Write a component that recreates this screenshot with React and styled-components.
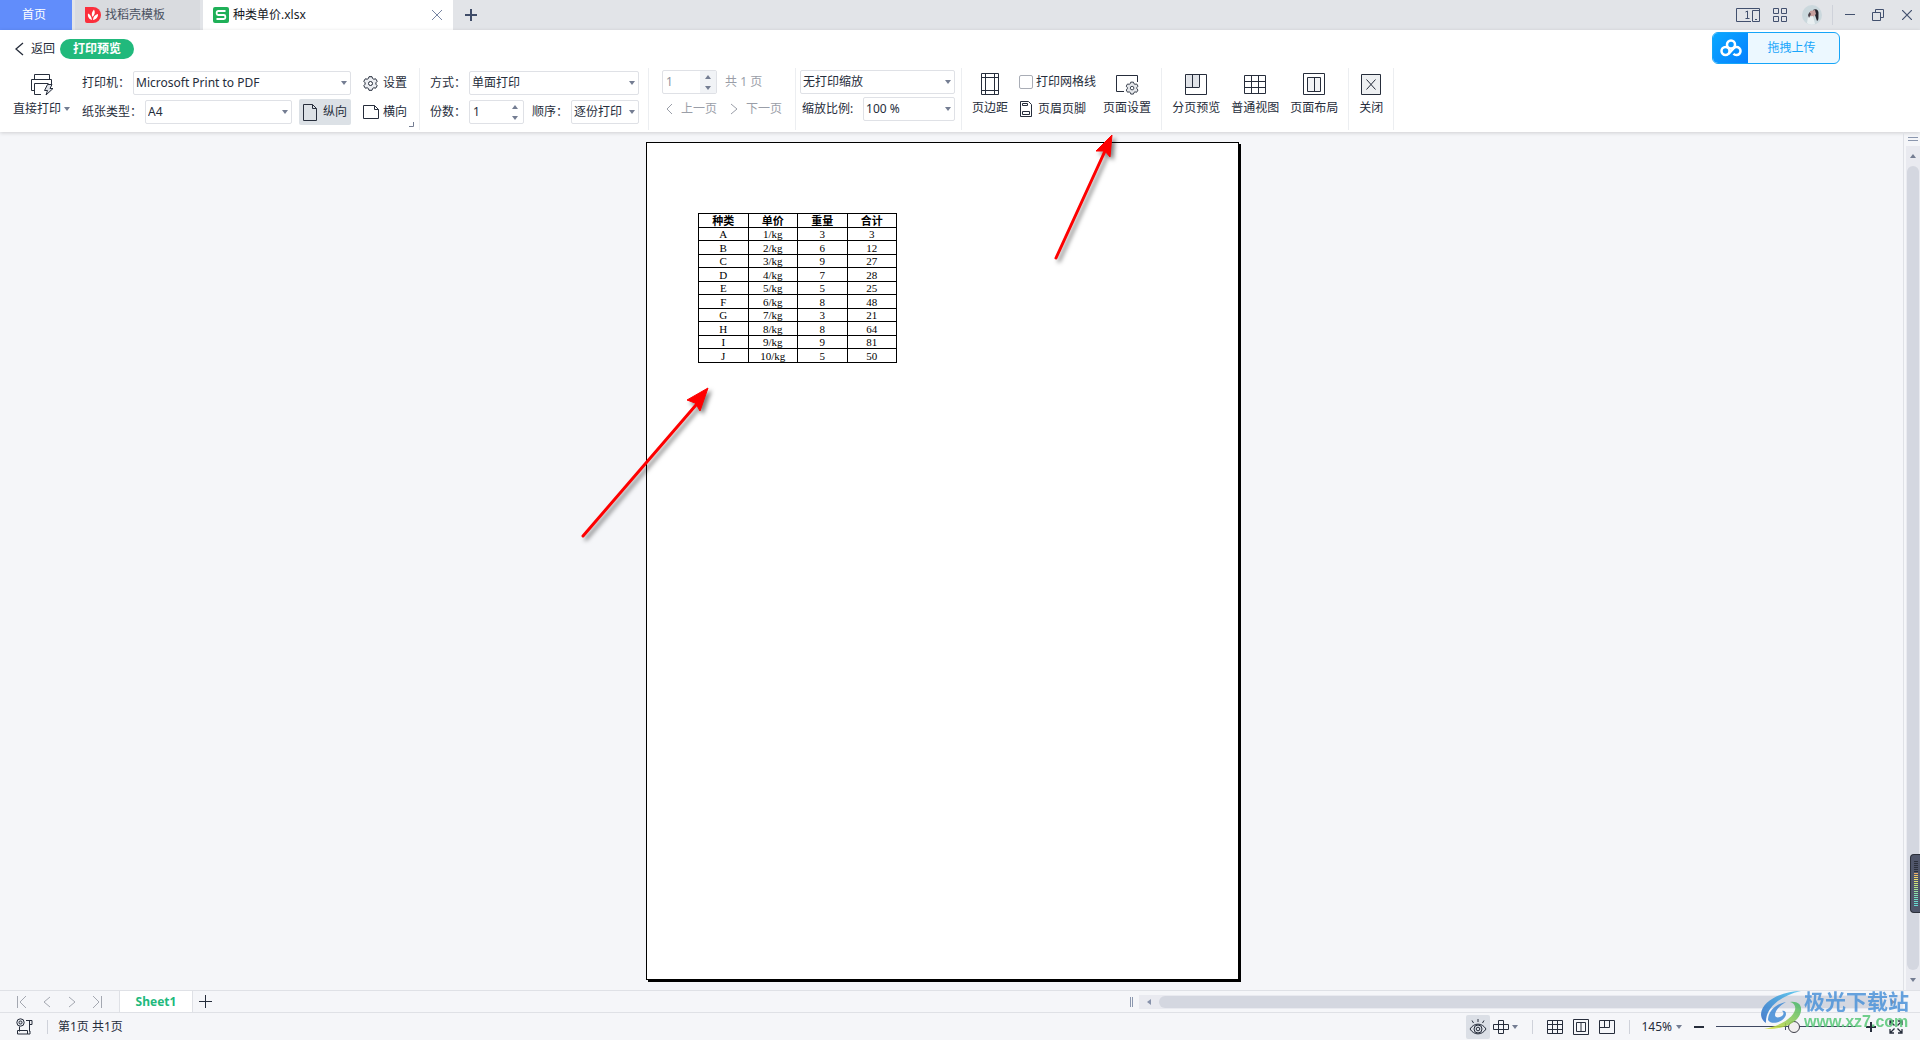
import React, { useState } from "react";
import styled, { createGlobalStyle } from "styled-components";

const INK = "#262d3b";
const LINE = "#dfe1e6";

const GlobalStyle = createGlobalStyle`
  *, *::before, *::after { box-sizing: border-box; }
  body { margin: 0; }
  body, button, input, select {
    font-family: "Noto Sans", "Noto Sans CJK SC", sans-serif;
    font-size: 12px;
    line-height: 16px;
    color: ${INK};
  }
  button { border: 0; padding: 0; margin: 0; background: none; cursor: pointer; }
  svg { display: block; flex: none; }
`;

/* ---------- shell ---------- */

const Window = styled.div`
  display: flex;
  flex-direction: column;
  min-height: 100vh;
  background: #f5f6f9;
`;

const Spacer = styled.div`
  flex: 1;
`;

/* ---------- title bar ---------- */

const TitleBar = styled.div`
  display: flex;
  align-items: stretch;
  height: 30px;
  background: #e2e4e8;
`;

const HomeTab = styled.button`
  width: 72px;
  margin-right: 3px;
  padding-right: 4px;
  background: #618dfb;
  color: #fff;
`;

const FileTab = styled.div`
  display: flex;
  align-items: center;
  gap: 4px;
  width: ${(p) => (p.$active ? 250 : 125)}px;
  padding: 0 10px;
  margin-right: ${(p) => (p.$active ? 0 : 3)}px;
  background: ${(p) => (p.$active ? "#fff" : "#d9dbdf")};
  color: ${(p) => (p.$active ? "#15181f" : "#4a5161")};
`;

const TabName = styled.button`
  color: inherit;
  flex: 1;
  text-align: left;
`;

const IconButton = styled.button`
  display: flex;
  align-items: center;
  justify-content: center;
  gap: 3px;
  width: ${(p) => p.$w || 24}px;
  height: ${(p) => p.$h || 24}px;
  border-radius: 2px;
  background: ${(p) => (p.$on ? "#dbdfe6" : "none")};
  flex: none;
`;

const WindowTools = styled.div`
  display: flex;
  align-items: center;
  padding-right: 3px;
`;

const Rule = styled.i`
  width: 1px;
  height: ${(p) => p.$h}px;
  margin: 0 ${(p) => p.$after || p.$gap}px 0 ${(p) => p.$gap}px;
  background: #cfd2da;
  flex: none;
`;

/* ---------- header ---------- */

const Header = styled.header`
  position: relative;
  background: #fff;
  box-shadow: 0 1px 4px rgba(0, 0, 0, 0.16);
`;

const NavRow = styled.div`
  display: flex;
  align-items: center;
  gap: 5px;
  height: 38px;
  padding: 0 15px;
`;

const BackButton = styled.button`
  display: flex;
  align-items: center;
  gap: 7px;
`;

const Pill = styled.span`
  height: 20px;
  padding: 2px 13px;
  border-radius: 10px;
  background: #21b97c;
  color: #fff;
  font-weight: 700;
`;

const UploadButton = styled.button`
  position: absolute;
  top: 2px;
  right: 80px;
  display: flex;
  align-items: stretch;
  width: 128px;
  height: 32px;
  border: 1px solid #16a5f8;
  border-radius: 6px;
  overflow: hidden;
  background: #ecf8ff;
`;

const UploadMark = styled.span`
  display: flex;
  align-items: center;
  justify-content: center;
  width: 35px;
  background: linear-gradient(135deg, #0aa8ff, #0680ff);
`;

const UploadText = styled.span`
  flex: 1;
  align-self: center;
  padding-right: 4px;
  color: #18a6fb;
`;

/* ---------- ribbon ---------- */

const Ribbon = styled.div`
  display: flex;
  height: 64px;
  padding: 0 0 2px 13px;
`;

const Group = styled.section`
  position: relative;
  display: flex;
  gap: ${(p) => p.$gap || 0}px;
  padding: 0 ${(p) => p.$right}px 0 ${(p) => p.$left || 0}px;
  border-right: 1px solid #eceef1;
`;

const Stack = styled.div`
  display: flex;
  flex-direction: column;
  gap: ${(p) => (p.$tight ? 3 : 5)}px;
  padding-top: ${(p) => (p.$tight ? 2 : 3)}px;
`;

const OptionStack = styled(Stack)`
  margin: 0 7px 0 11px;
`;

const Row = styled.div`
  display: flex;
  align-items: center;
  gap: ${(p) => (p.$gap === undefined ? 12 : p.$gap)}px;
  height: 24px;
  padding-left: ${(p) => p.$left || 0}px;
  white-space: nowrap;
  color: ${(p) => (p.$muted ? "#9a9ea8" : INK)};
`;

const Field = styled.div`
  display: flex;
  align-items: center;
  gap: 3px;
  width: ${(p) => (p.$w ? p.$w + "px" : "auto")};
  flex: ${(p) => (p.$grow ? 1 : "none")};
`;

const SelectBox = styled.span`
  display: grid;
  flex: 1;
  align-items: center;
  height: 24px;
  border: 1px solid ${LINE};
  border-radius: 2px;
  background: #fff;
  & > * { grid-area: 1 / 1; }
  & > svg { justify-self: end; margin-right: 3px; pointer-events: none; }
`;

const NativeSelect = styled.select`
  appearance: none;
  width: 100%;
  height: 22px;
  min-width: 0;
  padding: 0 12px 0 2px;
  border: 0;
  background: transparent;
`;

const SpinBox = styled.span`
  display: flex;
  width: 55px;
  height: 24px;
  border: 1px solid ${LINE};
  border-radius: 2px;
  background: #fff;
`;

const SpinInput = styled.input`
  flex: 1;
  min-width: 0;
  padding: 0 3px;
  border: 0;
  background: none;
  &:disabled { color: #8e939e; }
`;

const SpinButtons = styled.span`
  display: flex;
  flex-direction: column;
  width: 16px;
  background: ${(p) => (p.$muted ? "#f1f3f6" : "none")};
  & > button {
    flex: 1;
    display: flex;
    align-items: center;
    justify-content: center;
  }
`;

const InlineButton = styled.button`
  display: flex;
  align-items: center;
  gap: ${(p) => p.$gap || 5}px;
  height: ${(p) => (p.$on ? 26 : 24)}px;
  padding: ${(p) => (p.$on ? "0 4px" : 0)};
  border-radius: 2px;
  background: ${(p) => (p.$on ? "#dce1e6" : "none")};
  color: inherit;
  white-space: nowrap;
`;

const BigButton = styled.button`
  display: flex;
  flex-direction: column;
  align-items: center;
  gap: 5px;
  height: 52px;
  padding-top: 5px;
  white-space: nowrap;
`;

const BigLabel = styled.span`
  display: flex;
  align-items: center;
  gap: 3px;
`;

const CheckLabel = styled.label`
  display: flex;
  align-items: center;
  gap: 3px;
`;

const Checkbox = styled.input`
  appearance: none;
  width: 14px;
  height: 14px;
  margin: 0;
  border: 1px solid #a9adb6;
  border-radius: 2px;
  background: #fff;
  &:checked { background: #21b97c; }
`;

const Launcher = styled.button`
  position: absolute;
  right: 5px;
  bottom: 3px;
`;

/* ---------- canvas ---------- */

const Workspace = styled.main`
  flex: 1;
  display: flex;
`;

const Canvas = styled.div`
  flex: 1;
  display: flex;
  justify-content: center;
  align-items: flex-start;
  padding: 10px 18px 10px 0;
`;

const Paper = styled.article`
  position: relative;
  width: 593px;
  aspect-ratio: 593 / 838;
  padding: 70px 51px;
  border: 1px solid #000;
  background: #fff;
  box-shadow: 2px 2px 0 #000;
`;

const DataTable = styled.table`
  width: 199px;
  table-layout: fixed;
  border-collapse: collapse;
  font-family: "Liberation Serif", "Noto Sans CJK SC", serif;
  font-size: 11px;
  line-height: 12px;
  color: #000;
  th, td {
    height: 13px;
    padding: 0;
    border: 1px solid #000;
    text-align: center;
  }
  tr:nth-child(even) td, th { height: 14px; }
`;

const Annotation = styled.svg`
  position: absolute;
  left: ${(p) => p.$x}px;
  top: ${(p) => p.$y}px;
  overflow: visible;
  pointer-events: none;
  filter: drop-shadow(3px 3px 2px rgba(0, 0, 0, 0.5));
`;

const SideBar = styled.div`
  position: relative;
  display: flex;
  flex-direction: column;
  width: 17px;
  padding: 4px 0 0 2px;
  border-left: 1px solid ${LINE};
`;

const SplitMark = styled.i`
  align-self: center;
  width: 10px;
  height: 4px;
  margin: 1px 0 5px;
  border: solid #8b97ae;
  border-width: 1px 0;
`;

const Track = styled.div`
  flex: 1;
  display: flex;
  flex-direction: ${(p) => (p.$vertical ? "column" : "row")};
  align-items: stretch;
  background: #e9eaf0;
`;

const Thumb = styled.div`
  flex: 1;
  margin: ${(p) => (p.$vertical ? "0 1px" : "1px 0")};
  border-radius: 6px;
  background: #d4d7e0;
`;

const Meter = styled.div`
  position: absolute;
  right: 0;
  bottom: 77px;
  display: flex;
  flex-direction: column;
  align-items: center;
  gap: 1px;
  width: 10px;
  height: 59px;
  padding-top: 6px;
  border: 1px solid #2c303a;
  border-right: 0;
  border-radius: 4px 0 0 4px;
  background: #50566a;
`;

const MeterBar = styled.i`
  width: 4px;
  height: 1px;
  background: ${(p) => p.$c};
`;

/* ---------- bottom bars ---------- */

const Bottom = styled.footer`
  position: relative;
`;

const SheetBar = styled.div`
  display: flex;
  align-items: center;
  height: 23px;
  padding-right: 17px;
  border: solid ${LINE};
  border-width: 1px 0;
`;

const SheetNav = styled.div`
  display: flex;
  width: 119px;
  padding-left: 9px;
`;

const SheetTab = styled.button`
  align-self: stretch;
  width: 74px;
  border: solid ${LINE};
  border-width: 0 1px;
  background: #fff;
  color: #21b97c;
  font-weight: 700;
`;

const HScroll = styled.div`
  display: flex;
  align-items: center;
  gap: 6px;
  width: 773px;
  height: 14px;
  & > ${Track} { height: 14px; }
`;

const Grip = styled.i`
  width: 3px;
  height: 10px;
  border: solid #8b97ae;
  border-width: 0 1px;
`;

const StatusBar = styled.div`
  display: flex;
  align-items: center;
  height: 27px;
  padding: 0 6px 0 12px;
  white-space: nowrap;
`;

const ViewTools = styled.div`
  display: flex;
  align-items: center;
`;

const ZoomButton = styled.button`
  display: flex;
  align-items: center;
  gap: 4px;
  margin-right: 8px;
`;

const ZoomRange = styled.input`
  appearance: none;
  width: 140px;
  height: 14px;
  margin: 0 8px;
  background:
    linear-gradient(#3e4861, #3e4861) 69px center / 1px 7px no-repeat,
    linear-gradient(#3e4861, #3e4861) center / 100% 1px no-repeat;
  &::-webkit-slider-thumb {
    appearance: none;
    width: 12px;
    height: 12px;
    border: 1px solid #3d3f49;
    border-radius: 50%;
    background: #f1efef;
  }
`;

const Watermark = styled.div`
  position: absolute;
  right: 10px;
  bottom: 8px;
  display: flex;
  align-items: center;
  opacity: 0.85;
  pointer-events: none;
`;

const WatermarkText = styled.div`
  display: flex;
  flex-direction: column;
  width: 106px;
`;

const WatermarkName = styled.span`
  font-size: 21px;
  line-height: 22px;
  font-weight: 700;
  color: #4c93d9;
  white-space: nowrap;
`;

const WatermarkUrl = styled.span`
  font-family: "Liberation Sans", sans-serif;
  font-size: 16px;
  line-height: 20px;
  font-weight: 700;
  color: #58c878;
`;

/* ---------- icons ---------- */

function Icon({ w = 16, h = 16, stroke = INK, sw = 1, fill = "none", children }) {
  return (
    <svg width={w} height={h} viewBox={`0 0 ${w} ${h}`} fill={fill} stroke={stroke} strokeWidth={sw} aria-hidden="true">
      {children}
    </svg>
  );
}

const Caret = ({ up }) => (
  <Icon w={6} h={4} stroke="none" fill="#747d92">
    <path d={up ? "M0 4h6L3 0z" : "M0 0h6L3 4z"} />
  </Icon>
);

const Chevron = ({ dir = "left", w = 8, h = 14, stroke, sw }) => (
  <Icon w={w} h={h} stroke={stroke} sw={sw}>
    <path d={dir === "left" ? `M${w - 1} 1L1 ${h / 2}L${w - 1} ${h - 1}` : `M1 1L${w - 1} ${h / 2}L1 ${h - 1}`} />
  </Icon>
);

/* eight-lobed gear outline on a 15px box */
const gearPath =
  "M6 .7h3l.6 1.800 1.200.7 1.900-.4 1.500 2.500-1.300 1.500v1.400l1.300 1.500-1.500 2.500-1.900-.4-1.200.7-.6 1.800H6l-.6-1.800-1.200-.7-1.900.4L.8 9.700l1.300-1.500V6.800L.8 5.300l1.500-2.500 1.900.4 1.200-.7z";

const Gear = () => (
  <Icon w={15} h={15}>
    <path d={gearPath} fill="#eceef2" />
    <circle cx="7.500" cy="7.500" r="2" fill="#fff" />
  </Icon>
);

const PrinterIcon = () => (
  <Icon w={24} h={23}>
    <path d="M4.500 6V1.500h15V6M4.500 17.500H1.500V6.500h20V12M11 21.500H4.500v-11h14" />
    <path d="M17.500 11.500h4.500l-2 4h3L16 22l1.500-4.500H14.500z" fill="#dfe2e8" />
  </Icon>
);

const MarginIcon = () => (
  <Icon w={20} h={22}>
    <path d="M1.500.5h17v21h-17zM5.500.5v21M14.500.5v21M1.500 4.500h17M1.500 17.500h17" />
  </Icon>
);

const HeaderFooterIcon = () => (
  <Icon w={12} h={16}>
    <path d="M.5.5h8l3 3v12H.5zM2.500 2.500h5v2h-5zM2.500 10.500h7v3h-7z" />
  </Icon>
);

const PageSetupIcon = () => (
  <Icon w={24} h={22}>
    <path d="M9 18.500H1.500v-16h21V9" />
    <g transform="translate(10.500 8.500) scale(.88)">
      <path d={gearPath} fill="#e4e6ea" />
      <circle cx="7.500" cy="7.500" r="2" fill="#fff" />
    </g>
  </Icon>
);

const BreakPreviewIcon = () => (
  <Icon w={22} h={22}>
    <path d="M.5 1.500h21v20H.5z" />
    <path d="M1.500 2h12.500v12H1z" fill="#e0e3e8" stroke="none" />
    <path d="M.5 14.500h13.500M7.500 1.500v13M14.500 1.500v13" />
  </Icon>
);

const GridIcon = ({ big }) =>
  big ? (
    <Icon w={22} h={22}>
      <path d="M.5 2.500h21v18H.5zM7.500 2.500v18M14.500 2.500v18M.5 8.500h21M.5 14.500h21" />
    </Icon>
  ) : (
    <Icon w={16} h={14}>
      <path d="M.5.5h15v13H.5zM5.500 0v14M10.500 0v14M0 4.500h16M0 9.500h16" />
    </Icon>
  );

const LayoutIcon = ({ big }) =>
  big ? (
    <Icon w={22} h={22}>
      <path d="M.5.5h21v21H.5z" />
      <path d="M4.500 4.500h13v14h-13zM11.500 4.500v14" fill="#f2f3f5" />
    </Icon>
  ) : (
    <Icon w={16} h={16}>
      <path d="M.5.5h15v15H.5zM3.500 3.500h9v9h-9zM8 3.500v9" />
    </Icon>
  );

const CloseBoxIcon = () => (
  <Icon w={20} h={22}>
    <path d="M.5 1.500h19v20H.5z" fill="#eef0f2" />
    <path d="M5.500 6.500l9 10M14.500 6.500l-9 10" />
  </Icon>
);

/* ---------- parts ---------- */

function Select({ id, label, options }) {
  return (
    <Field $grow>
      <label htmlFor={id}>{label}</label>
      <SelectBox>
        <NativeSelect id={id}>
          {options.map((o) => (
            <option key={o}>{o}</option>
          ))}
        </NativeSelect>
        <Caret />
      </SelectBox>
    </Field>
  );
}

function Spinner({ id, label, disabled }) {
  const [value, setValue] = useState(1);
  return (
    <SpinBox>
      <SpinInput
        id={id}
        aria-label={label}
        disabled={disabled}
        value={value}
        onChange={(e) => setValue(Number(e.target.value) || 1)}
      />
      <SpinButtons $muted={disabled}>
        <button aria-label="+1" disabled={disabled} onClick={() => setValue(value + 1)}><Caret up /></button>
        <button aria-label="-1" disabled={disabled} onClick={() => setValue(Math.max(1, value - 1))}><Caret /></button>
      </SpinButtons>
    </SpinBox>
  );
}

function Big({ icon, children }) {
  return (
    <BigButton>
      {icon}
      <BigLabel>{children}</BigLabel>
    </BigButton>
  );
}

const COLUMNS = ["种类", "单价", "重量", "合计"];
const ROWS = [
  ["A", "1/kg", 3, 3],
  ["B", "2/kg", 6, 12],
  ["C", "3/kg", 9, 27],
  ["D", "4/kg", 7, 28],
  ["E", "5/kg", 5, 25],
  ["F", "6/kg", 8, 48],
  ["G", "7/kg", 3, 21],
  ["H", "8/kg", 8, 64],
  ["I", "9/kg", 9, 81],
  ["J", "10/kg", 5, 50],
];

const METER = [
  ...Array(6).fill("#2b2f3b"),
  "#efb06a", "#f0c463", "#efd568", "#ecdf6e", "#dfe272", "#cfe57a", "#bfe680", "#b3e589",
  "#a5e494", "#98e39f", "#8ce2aa", "#82e0b4", "#79dfbd", "#72dec5", "#6cddcb", "#68dcd0", "#66dbd3",
];

function Titles() {
  return (
    <TitleBar>
      <HomeTab>首页</HomeTab>
      <FileTab>
        <Icon w={16} h={16} stroke="none">
          <path d="M0 0h8a8 8 0 1 1 0 16H2a2 2 0 0 1-2-2z" fill="#fb2f3c" />
          <path d="M7 13C3.500 12 2.500 9 3 6.500c2 .8 3.500 3 4 6.500zM7.500 10C6 7.500 7 4.500 9 2.500c1.500 2.500.8 5.500-1.500 7.500zM8 13c0-3 2-5.500 5-6 .3 3-2 5.500-5 6z" fill="#fff" />
        </Icon>
        <TabName>找稻壳模板</TabName>
      </FileTab>
      <FileTab $active>
        <Icon w={16} h={16} stroke="none">
          <rect width="16" height="16" rx="2" fill="#1fb058" />
          <path d="M12.500 4H5.200a1.500 1.500 0 0 0-1.500 1.500v1A1.500 1.500 0 0 0 5.200 8h5.600a1.500 1.500 0 0 1 1.500 1.500v1a1.500 1.500 0 0 1-1.500 1.500H3.500" fill="none" stroke="#fff" strokeWidth="1.800" />
        </Icon>
        <TabName>种类单价.xlsx</TabName>
        <IconButton $w={12} aria-label="关闭标签">
          <Icon w={12} h={12} stroke="#7785a3"><path d="M1 1l10 10M11 1L1 11" /></Icon>
        </IconButton>
      </FileTab>
      <IconButton $w={36} $h={30} aria-label="新建标签">
        <Icon w={12} h={12} stroke="#3f4c68" sw={2}><path d="M6 0v12M0 6h12" /></Icon>
      </IconButton>
      <Spacer />
      <WindowTools>
        <IconButton $w={32} aria-label="窗口布局">
          <Icon w={24} h={14} stroke="#42506e">
            <path d="M15 13.500H.5V.5h23v13h-7v-11h7M9.500 4l2-1v7.500M9.500 10.500h4M19 11.500h2" />
          </Icon>
        </IconButton>
        <IconButton $w={32} aria-label="应用">
          <Icon w={14} h={14} stroke="#42506e">
            <path d="M.5.5h5v5h-5zM8.500.5h5v5h-5zM.5 8.500h5v5h-5zM8.500 8.500h5v5h-5z" />
          </Icon>
        </IconButton>
        <IconButton $w={32} aria-label="账户">
          <Icon w={20} h={20} stroke="none">
            <circle cx="10" cy="10" r="10" fill="#cbd8dd" />
            <path d="M11 5c3-2 6 0 5.500 4-.2 3 .5 6-1.500 7l-2-6z" fill="#26242d" />
            <path d="M8 6l5-1 1 4-3 3-3-1z" fill="#c79f9d" />
            <path d="M6 12l5-1 2 8c-3 1.500-6 .5-8-1z" fill="#e9eff1" />
            <path d="M6 10l1.500-3L9 9l-2 4z" fill="#4b4048" />
          </Icon>
        </IconButton>
        <Rule $h={20} $gap={4} $after={8} />
        <IconButton $w={18} aria-label="最小化">
          <Icon w={10} h={10} stroke="#42506e"><path d="M0 4.500h10" /></Icon>
        </IconButton>
        <IconButton $w={38} aria-label="还原">
          <Icon w={12} h={12} stroke="#42506e">
            <path d="M.5 3.500h8v8h-8zM3.500 3.500v-3h8v8h-3" />
          </Icon>
        </IconButton>
        <IconButton $w={20} aria-label="关闭窗口">
          <Icon w={10} h={10} stroke="#42506e" sw={1.200}><path d="M0 0l10 10M10 0L0 10" /></Icon>
        </IconButton>
      </WindowTools>
    </TitleBar>
  );
}

function PrintRibbon() {
  return (
    <Ribbon>
      <Group $gap={12} $right={12}>
        <Big icon={<PrinterIcon />}>直接打印<Caret /></Big>
        <Stack>
          <Row>
            <Field $w={269}>
              <Select id="printer" label="打印机：" options={["Microsoft Print to PDF"]} />
            </Field>
            <InlineButton><Gear />设置</InlineButton>
          </Row>
          <Row>
            <Row $gap={7}>
              <Field $w={210}>
                <Select id="paper" label="纸张类型：" options={["A4", "A3", "B5"]} />
              </Field>
              <InlineButton $on $gap={6}>
                <Icon w={14} h={17}><path d="M.5.5h9l4 4v12H.5zM9.500.5v4h4" /></Icon>
                纵向
              </InlineButton>
            </Row>
            <InlineButton $gap={4}>
              <Icon w={16} h={14}><path d="M.5.5h11l4 4v9H.5zM11.500.5v4h4" /></Icon>
              横向
            </InlineButton>
          </Row>
        </Stack>
        <Launcher aria-label="更多打印选项">
          <Icon w={5} h={5} stroke="#747d92"><path d="M0 4.500h4.500V0" /></Icon>
        </Launcher>
      </Group>

      <Group $left={10} $right={9}>
        <Stack>
          <Row>
            <Field $w={209}>
              <Select id="mode" label="方式：" options={["单面打印", "双面打印"]} />
            </Field>
          </Row>
          <Row $gap={8}>
            <Field>
              <label htmlFor="copies">份数：</label>
              <Spinner id="copies" />
            </Field>
            <Select id="order" label="顺序：" options={["逐份打印"]} />
          </Row>
        </Stack>
      </Group>

      <Group $left={13} $right={13}>
        <Stack $tight>
          <Row $gap={8} $muted>
            <Spinner label="页码" disabled />
            <span>共 1 页</span>
          </Row>
          <Row $gap={13} $left={4} $muted>
            <InlineButton $gap={8}><Chevron w={7} h={12} stroke="#9a9ea8" />上一页</InlineButton>
            <InlineButton $gap={8}><Chevron dir="right" w={8} h={12} stroke="#9a9ea8" />下一页</InlineButton>
          </Row>
        </Stack>
      </Group>

      <Group $left={4} $right={6}>
        <Stack $tight>
          <Row>
            <Field $w={155}>
              <SelectBox>
                <NativeSelect aria-label="打印缩放">
                  <option>无打印缩放</option>
                </NativeSelect>
                <Caret />
              </SelectBox>
            </Field>
          </Row>
          <Row $left={2} $gap={0}>
            <Field $w={61}><label htmlFor="scale">缩放比例:</label></Field>
            <SelectBox>
              <NativeSelect id="scale">
                <option>100 %</option>
              </NativeSelect>
              <Caret />
            </SelectBox>
          </Row>
        </Stack>
      </Group>

      <Group $left={10} $right={10}>
        <Big icon={<MarginIcon />}>页边距</Big>
        <OptionStack $tight>
          <Row><CheckLabel><Checkbox type="checkbox" />打印网格线</CheckLabel></Row>
          <Row $left={1}><InlineButton $gap={6}><HeaderFooterIcon />页眉页脚</InlineButton></Row>
        </OptionStack>
        <Big icon={<PageSetupIcon />}>页面设置</Big>
      </Group>

      <Group $left={10} $right={10} $gap={11}>
        <Big icon={<BreakPreviewIcon />}>分页预览</Big>
        <Big icon={<GridIcon big />}>普通视图</Big>
        <Big icon={<LayoutIcon big />}>页面布局</Big>
      </Group>

      <Group $left={10} $right={10}>
        <Big icon={<CloseBoxIcon />}>关闭</Big>
      </Group>
    </Ribbon>
  );
}

function PrintPage() {
  return (
    <Paper>
      <DataTable>
        <thead>
          <tr>{COLUMNS.map((c) => <th key={c} scope="col">{c}</th>)}</tr>
        </thead>
        <tbody>
          {ROWS.map((r) => (
            <tr key={r[0]}>{r.map((v, i) => <td key={i}>{v}</td>)}</tr>
          ))}
        </tbody>
      </DataTable>
      <Annotation $x={-67} $y={243} width="130" height="152">
        <path d="M3 150L116 19" stroke="#fe0000" strokeWidth="3" strokeLinecap="round" />
        <path d="M128 2L107 14l8 3 1 1 4 7z" stroke="#fe0000" fill="#fe0000" />
      </Annotation>
      <Annotation $x={406} $y={-12} width="60" height="130">
        <path d="M3 127L52 20" stroke="#fe0000" strokeWidth="3" strokeLinecap="round" />
        <path d="M59 4L43 20h9l5 6z" stroke="#fe0000" fill="#fe0000" />
      </Annotation>
    </Paper>
  );
}

function SheetTabs() {
  const nav = "#a4a8b1";
  return (
    <SheetBar>
      <SheetNav>
        <IconButton $w={25} $h={20} aria-label="第一张"><Icon w={10} h={12} stroke={nav}><path d="M.5 0v12M9 0L3 6l6 6" /></Icon></IconButton>
        <IconButton $w={25} $h={20} aria-label="上一张"><Chevron w={8} h={12} stroke={nav} /></IconButton>
        <IconButton $w={25} $h={20} aria-label="下一张"><Chevron dir="right" w={8} h={12} stroke={nav} /></IconButton>
        <IconButton $w={25} $h={20} aria-label="最后一张"><Icon w={10} h={12} stroke={nav}><path d="M9.500 0v12M1 0l6 6-6 6" /></Icon></IconButton>
      </SheetNav>
      <SheetTab>Sheet1</SheetTab>
      <IconButton $w={24} $h={20} aria-label="新建工作表">
        <Icon w={13} h={13}><path d="M6.500 0v13M0 6.500h13" /></Icon>
      </IconButton>
      <Spacer />
      <HScroll>
        <Grip />
        <Track>
          <IconButton $w={20} $h={14} aria-label="向左">
            <Icon w={4} h={6} stroke="none" fill="#8792ab"><path d="M4 0v6L0 3z" /></Icon>
          </IconButton>
          <Thumb />
          <IconButton $w={20} $h={14} aria-label="向右">
            <Icon w={4} h={6} stroke="none" fill="#8792ab"><path d="M0 0v6l4-3z" /></Icon>
          </IconButton>
        </Track>
      </HScroll>
    </SheetBar>
  );
}

function Status() {
  return (
    <StatusBar>
      <IconButton aria-label="宏">
        <Icon w={17} h={17}>
          <circle cx="4.500" cy="4.500" r="3.700" fill="#dfe2e8" />
          <circle cx="4.500" cy="4.500" r="1.500" />
          <path d="M10 2.500h6v4h-2.500M13.500 2.500v11M3.500 8.500v5M1.500 12.500h10v3.500h-10zM11.500 16h2.500v-3" />
        </Icon>
      </IconButton>
      <Rule $h={14} $gap={11} $after={10} />
      <span>第1页 共1页</span>
      <Spacer />
      <ViewTools>
        <IconButton $on aria-label="护眼模式">
          <Icon w={18} h={16}>
            <path d="M1 10c4-6.500 12-6.500 16 0-4 6.500-12 6.500-16 0zM9 3V0M4.500 4L3 1.500M13.500 4L15 1.500" />
            <circle cx="9" cy="10" r="4" />
            <circle cx="9" cy="10" r="1.800" />
          </Icon>
        </IconButton>
        <IconButton $w={31} aria-label="阅读模式">
          <Icon w={16} h={14}>
            <path d="M5.500.5h5v13h-5zM.5 4.500h15v5H.5z" />
          </Icon>
          <Caret />
        </IconButton>
        <Rule $h={14} $gap={11} />
        <IconButton $w={22} aria-label="普通视图"><GridIcon /></IconButton>
        <IconButton $w={30} aria-label="页面布局"><LayoutIcon /></IconButton>
        <IconButton $w={22} aria-label="分页预览">
          <Icon w={16} h={14}>
            <path d="M.5.5h15v13H.5zM5.500.5v7M10.500.5v7M.5 7.500h10" />
          </Icon>
        </IconButton>
        <Rule $h={14} $gap={11} />
        <ZoomButton aria-label="缩放比例">145%<Caret /></ZoomButton>
        <IconButton $w={18} aria-label="缩小">
          <Icon w={10} h={10} sw={2}><path d="M0 5h10" /></Icon>
        </IconButton>
        <ZoomRange type="range" min="0" max="100" defaultValue="56" aria-label="缩放" />
        <IconButton $w={14} aria-label="放大">
          <Icon w={10} h={10} sw={2}><path d="M5 0v10M0 5h10" /></Icon>
        </IconButton>
        <IconButton $w={36} aria-label="全屏">
          <Icon w={14} h={14} sw={1.300}>
            <path d="M1 5V1h4M9 1h4v4M13 9v4H9M5 13H1V9M1 1l4.500 4.500M13 1L8.500 5.500M13 13L8.500 8.500M1 13l4.500-4.500" />
          </Icon>
        </IconButton>
      </ViewTools>
    </StatusBar>
  );
}

export default function App() {
  return (
    <Window lang="zh-CN">
      <GlobalStyle />
      <Titles />
      <Header>
        <NavRow>
          <BackButton><Chevron w={9} h={14} sw={1.300} />返回</BackButton>
          <Pill>打印预览</Pill>
        </NavRow>
        <PrintRibbon />
        <UploadButton>
          <UploadMark>
            <Icon w={22} h={18} stroke="#fff" sw={2.500}>
              <circle cx="11" cy="5.500" r="4" />
              <circle cx="5.500" cy="12" r="4" />
              <path d="M8.500 15l5-5.500a4 4 0 1 1 0 5.200" />
            </Icon>
          </UploadMark>
          <UploadText>拖拽上传</UploadText>
        </UploadButton>
      </Header>
      <Workspace>
        <Canvas><PrintPage /></Canvas>
        <SideBar>
          <SplitMark />
          <Track $vertical>
            <IconButton $w={14} $h={20} aria-label="向上"><Caret up /></IconButton>
            <Thumb $vertical />
            <IconButton $w={14} $h={20} aria-label="向下"><Caret /></IconButton>
          </Track>
          <Meter>{METER.map((c, i) => <MeterBar key={i} $c={c} />)}</Meter>
        </SideBar>
      </Workspace>
      <Bottom>
        <SheetTabs />
        <Status />
        <Watermark>
          <svg width="44" height="42" viewBox="0 0 44 42">
            <defs>
              <linearGradient id="sky" x1="0" y1="1" x2="1" y2="0">
                <stop offset="0" stopColor="#2a67c4" />
                <stop offset="1" stopColor="#4cc4ee" />
              </linearGradient>
              <linearGradient id="leaf" x1="0" y1="1" x2="1" y2="0">
                <stop offset="0" stopColor="#dfe23a" />
                <stop offset="1" stopColor="#3fb56c" />
              </linearGradient>
            </defs>
            <path d="M41 1C24 1 2 10 1 24c0 4 2 7 5 9C5 20 18 6 41 1z" fill="url(#sky)" />
            <path d="M8 30c0-8 7-16 18-18-7 4-11 9-11 13 0 3 4 3 7 1 2-2 2-4 0-5 4-1 5 3 3 6-4 6-14 8-17 3z" fill="#3f8ad6" />
            <path d="M30 12c8-1 12 3 11 9-2 12-18 19-37 18 12-2 28-9 31-19 1-4-1-7-5-8z" fill="url(#leaf)" />
          </svg>
          <WatermarkText>
            <WatermarkName>极光下载站</WatermarkName>
            <WatermarkUrl>www.xz7.com</WatermarkUrl>
          </WatermarkText>
        </Watermark>
      </Bottom>
    </Window>
  );
}
